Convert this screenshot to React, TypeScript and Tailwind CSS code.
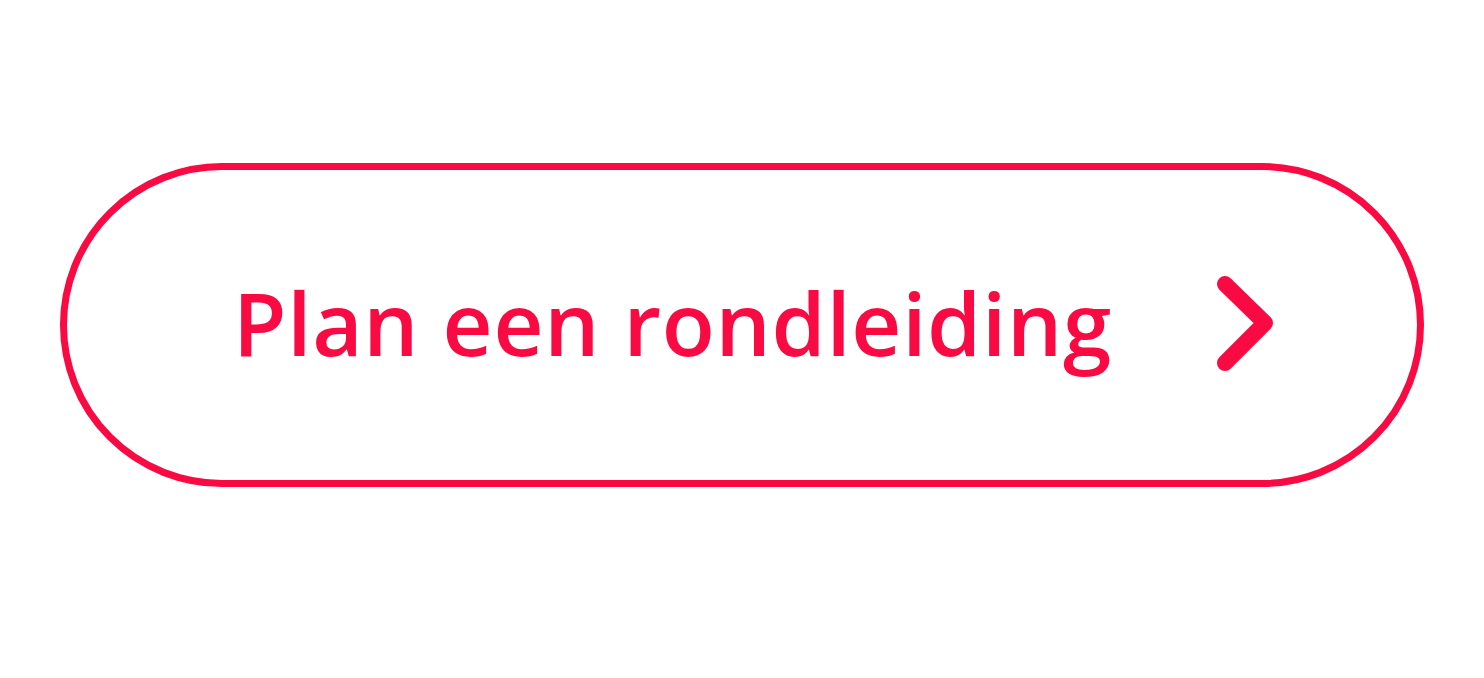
export default function App() {
    return (
        <div className="min-h-screen bg-white flex justify-center pt-[163px]">
            <a
                href="#"
                className="w-[1364px] h-[324px] rounded-full border-[7px] border-[#f90a43] flex items-center pl-[166px] pr-[141px] text-[#f90a43]"
            >
                <span className="text-[87px] font-semibold leading-none tracking-[0.7px] mt-[-6px]" style={{ fontFamily: '"Open Sans", "Lato", sans-serif' }}>
                    Plan een rondleiding
                </span>
                <svg width="62" height="104" viewBox="0 0 62 104" className="ml-auto" fill="none">
                    <path d="M11 11 L51 50 L11 90" stroke="#f90a43" strokeWidth="16" strokeLinecap="round" strokeLinejoin="round" />
                </svg>
            </a>
        </div>
    );
}
